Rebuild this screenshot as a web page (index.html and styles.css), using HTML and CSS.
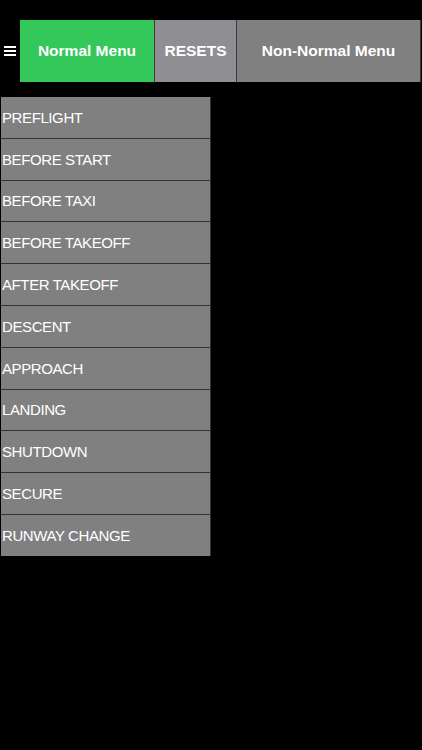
FILE: index.html
```html
<!DOCTYPE html>
<html>
<head>
  <link rel="stylesheet" href="styles.css">
</head>
<body>
  <div class="tab-bar">
    <div class="menu-toggle">
      <span></span><span></span><span></span>
    </div>
    <div class="tab tab-normal">Normal Menu</div>
    <div class="tab tab-resets">RESETS</div>
    <div class="tab tab-nonnormal">Non-Normal Menu</div>
  </div>

  <ul class="checklist">
    <li>PREFLIGHT</li>
    <li>BEFORE START</li>
    <li>BEFORE TAXI</li>
    <li>BEFORE TAKEOFF</li>
    <li>AFTER TAKEOFF</li>
    <li>DESCENT</li>
    <li>APPROACH</li>
    <li>LANDING</li>
    <li>SHUTDOWN</li>
    <li>SECURE</li>
    <li>RUNWAY CHANGE</li>
  </ul>
</body>
</html>
```

FILE: styles.css
```css
body {
  margin: 0;
  background-color: #000;
  font-family: "Liberation Sans", Arial, sans-serif;
}

.tab-bar {
  display: flex;
  margin-top: 20px;
  height: 62px;
}

.menu-toggle {
  width: 20px;
  display: flex;
  flex-direction: column;
  justify-content: center;
  gap: 2px;
  padding-left: 4px;
  box-sizing: border-box;
}

.menu-toggle span {
  display: block;
  width: 12px;
  height: 2px;
  background-color: #fff;
}

.tab {
  display: flex;
  align-items: center;
  justify-content: center;
  color: #fff;
  font-size: 15.5px;
  font-weight: bold;
  border-right: 1px solid #3a3a3a;
}

.tab-normal {
  width: 134px;
  background-color: #34c759;
}

.tab-resets {
  width: 81px;
  background-color: #8e8e93;
}

.tab-nonnormal {
  width: 183px;
  background-color: #808080;
}

.checklist {
  list-style: none;
  margin: 15px 0 0 1px;
  padding: 0;
  width: 210px;
}

.checklist li {
  height: 40.8px;
  display: flex;
  align-items: center;
  padding-left: 1px;
  background-color: #808080;
  color: #fff;
  font-size: 15px;
  letter-spacing: -0.4px;
  border-bottom: 1px solid #333;
  border-right: 1px solid #333;
}

.checklist li:last-child {
  border-bottom: none;
}
```
